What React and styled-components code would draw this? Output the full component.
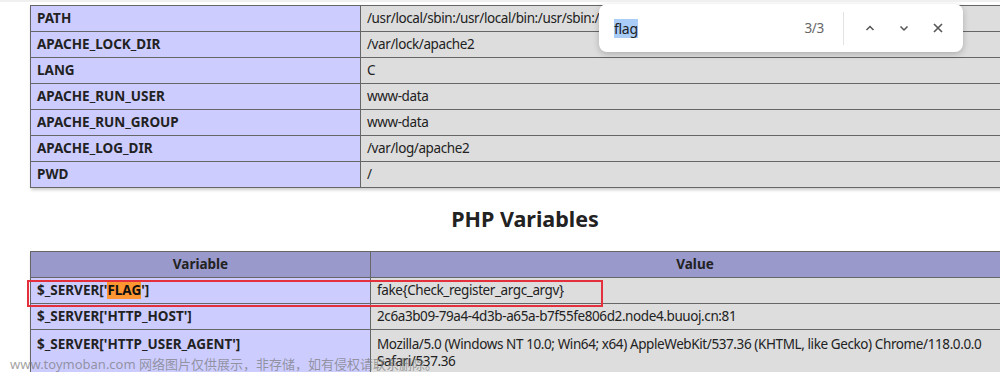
import React from "react";
import styled, { createGlobalStyle } from "styled-components";

const Global = createGlobalStyle`
  html, body { margin: 0; padding: 0; background: #fff; }
  body {
    width: 1000px; height: 372px; overflow: hidden; position: relative;
    font-family: "Noto Sans", "Open Sans", sans-serif; color: #222;
  }
`;

const Page = styled.div`
  position: relative;
  width: 1000px;
  height: 372px;
  overflow: hidden;
  border-top: 2px solid #f0f0f0;
  box-sizing: border-box;
`;

const Content = styled.div`
  width: 990px;
  padding: 3px 0 0 30px;
  display: flex;
  flex-direction: column;
`;

const Table = styled.table`
  border-collapse: collapse;
  width: 990px;
  table-layout: fixed;
  box-shadow: 1px 2px 3px #ccc;
`;

const Cell = styled.td`
  border: 1px solid #666;
  font-size: 13.5px;
  line-height: 15px;
  padding: 5px 6px;
  vertical-align: baseline;
  white-space: ${(p) => (p.$wrap ? "normal" : "nowrap")};
  overflow: hidden;
`;

const Key = styled(Cell)`
  background: #ccf;
  font-weight: bold;
  color: #222;
`;

const Val = styled(Cell)`
  background: #ddd;
  color: #222;
  letter-spacing: -0.4px;
  line-height: ${(p) => (p.$wrap ? "17px" : "15px")};
  padding-top: ${(p) => (p.$wrap ? "6px" : "5px")};
`;

const Head = styled.th`
  border: 1px solid #666;
  background: #99c;
  font-size: 13.5px;
  line-height: 15px;
  padding: 5px 6px;
  font-weight: bold;
  text-align: center;
  color: #222;
`;

const Heading = styled.h2`
  margin: 15px 0 16px;
  font-size: 21.5px;
  line-height: 32px;
  font-weight: bold;
  text-align: center;
  color: #222;
`;

const Mark = styled.span`
  background: #ff9632;
  color: #111;
`;

const Annot = styled.div`
  position: absolute;
  left: 27px;
  top: 278px;
  width: 572px;
  height: 23px;
  border: 2px solid #e3303c;
  pointer-events: none;
`;

const FindBar = styled.div`
  position: absolute;
  left: 599px;
  top: 2px;
  width: 364px;
  height: 48px;
  background: #fff;
  border-radius: 8px;
  box-shadow: 0 2px 6px rgba(0, 0, 0, 0.22);
  display: flex;
  align-items: center;
  box-sizing: border-box;
  padding: 0 8px 0 15px;
`;

const Query = styled.div`
  flex: 1;
  font-size: 14px;
  color: #202124;
  letter-spacing: -0.3px;
`;

const Selected = styled.span`
  background: #a9cdf7;
`;

const Count = styled.div`
  font-size: 13.5px;
  color: #666;
  margin-right: 19px;
  letter-spacing: -0.3px;
`;

const Divider = styled.div`
  width: 1px;
  height: 33px;
  background: #e3e3e3;
  margin-right: 9px;
`;

const IconBtn = styled.div`
  width: 34px;
  height: 34px;
  display: flex;
  align-items: center;
  justify-content: center;
  color: #555;
`;

const Watermark = styled.div`
  position: absolute;
  left: 10px;
  top: 352px;
  font-size: 13px;
  color: rgba(120, 120, 120, 0.7);
  font-family: "Noto Sans", "Noto Sans CJK SC", sans-serif;
  white-space: nowrap;
`;

const env = [
  ["PATH", "/usr/local/sbin:/usr/local/bin:/usr/sbin:/usr/bin:/sbin:/bin"],
  ["APACHE_LOCK_DIR", "/var/lock/apache2"],
  ["LANG", "C"],
  ["APACHE_RUN_USER", "www-data"],
  ["APACHE_RUN_GROUP", "www-data"],
  ["APACHE_LOG_DIR", "/var/log/apache2"],
  ["PWD", "/"],
];

const Up = () => (
  <svg width="10" height="10" viewBox="0 0 10 10" fill="none" stroke="currentColor" strokeWidth="1.5">
    <path d="M1.5 7 L5 3.5 L8.5 7" />
  </svg>
);
const Down = () => (
  <svg width="10" height="10" viewBox="0 0 10 10" fill="none" stroke="currentColor" strokeWidth="1.5">
    <path d="M1.5 3.5 L5 7 L8.5 3.5" />
  </svg>
);
const Close = () => (
  <svg width="10" height="10" viewBox="0 0 10 10" fill="none" stroke="currentColor" strokeWidth="1.6">
    <path d="M1 1 L9 9 M9 1 L1 9" />
  </svg>
);

export default function App() {
  return (
    <>
      <Global />
      <Page>
        <Content>
          <Table>
            <colgroup>
              <col style={{ width: 330 }} />
              <col />
            </colgroup>
            <tbody>
              {env.map(([k, v]) => (
                <tr key={k}>
                  <Key>{k}</Key>
                  <Val>{v}</Val>
                </tr>
              ))}
            </tbody>
          </Table>
          <Heading>PHP Variables</Heading>
          <Table>
            <colgroup>
              <col style={{ width: 340 }} />
              <col />
            </colgroup>
            <thead>
              <tr>
                <Head>Variable</Head>
                <Head>Value</Head>
              </tr>
            </thead>
            <tbody>
              <tr>
                <Key>
                  $_SERVER['<Mark>FLAG</Mark>']
                </Key>
                <Val>fake{"{"}Check_register_argc_argv{"}"}</Val>
              </tr>
              <tr>
                <Key>$_SERVER['HTTP_HOST']</Key>
                <Val>2c6a3b09-79a4-4d3b-a65a-b7f55fe806d2.node4.buuoj.cn:81</Val>
              </tr>
              <tr>
                <Key>$_SERVER['HTTP_USER_AGENT']</Key>
                <Val $wrap>
                  Mozilla/5.0 (Windows NT 10.0; Win64; x64) AppleWebKit/537.36 (KHTML, like Gecko) Chrome/118.0.0.0
                  Safari/537.36
                </Val>
              </tr>
            </tbody>
          </Table>
        </Content>
        <Annot />
        <FindBar>
          <Query>
            <Selected>flag</Selected>
          </Query>
          <Count>3/3</Count>
          <Divider />
          <IconBtn><Up /></IconBtn>
          <IconBtn><Down /></IconBtn>
          <IconBtn><Close /></IconBtn>
        </FindBar>
        <Watermark>www.toymoban.com 网络图片仅供展示，非存储，如有侵权请联系删除。</Watermark>
      </Page>
    </>
  );
}
